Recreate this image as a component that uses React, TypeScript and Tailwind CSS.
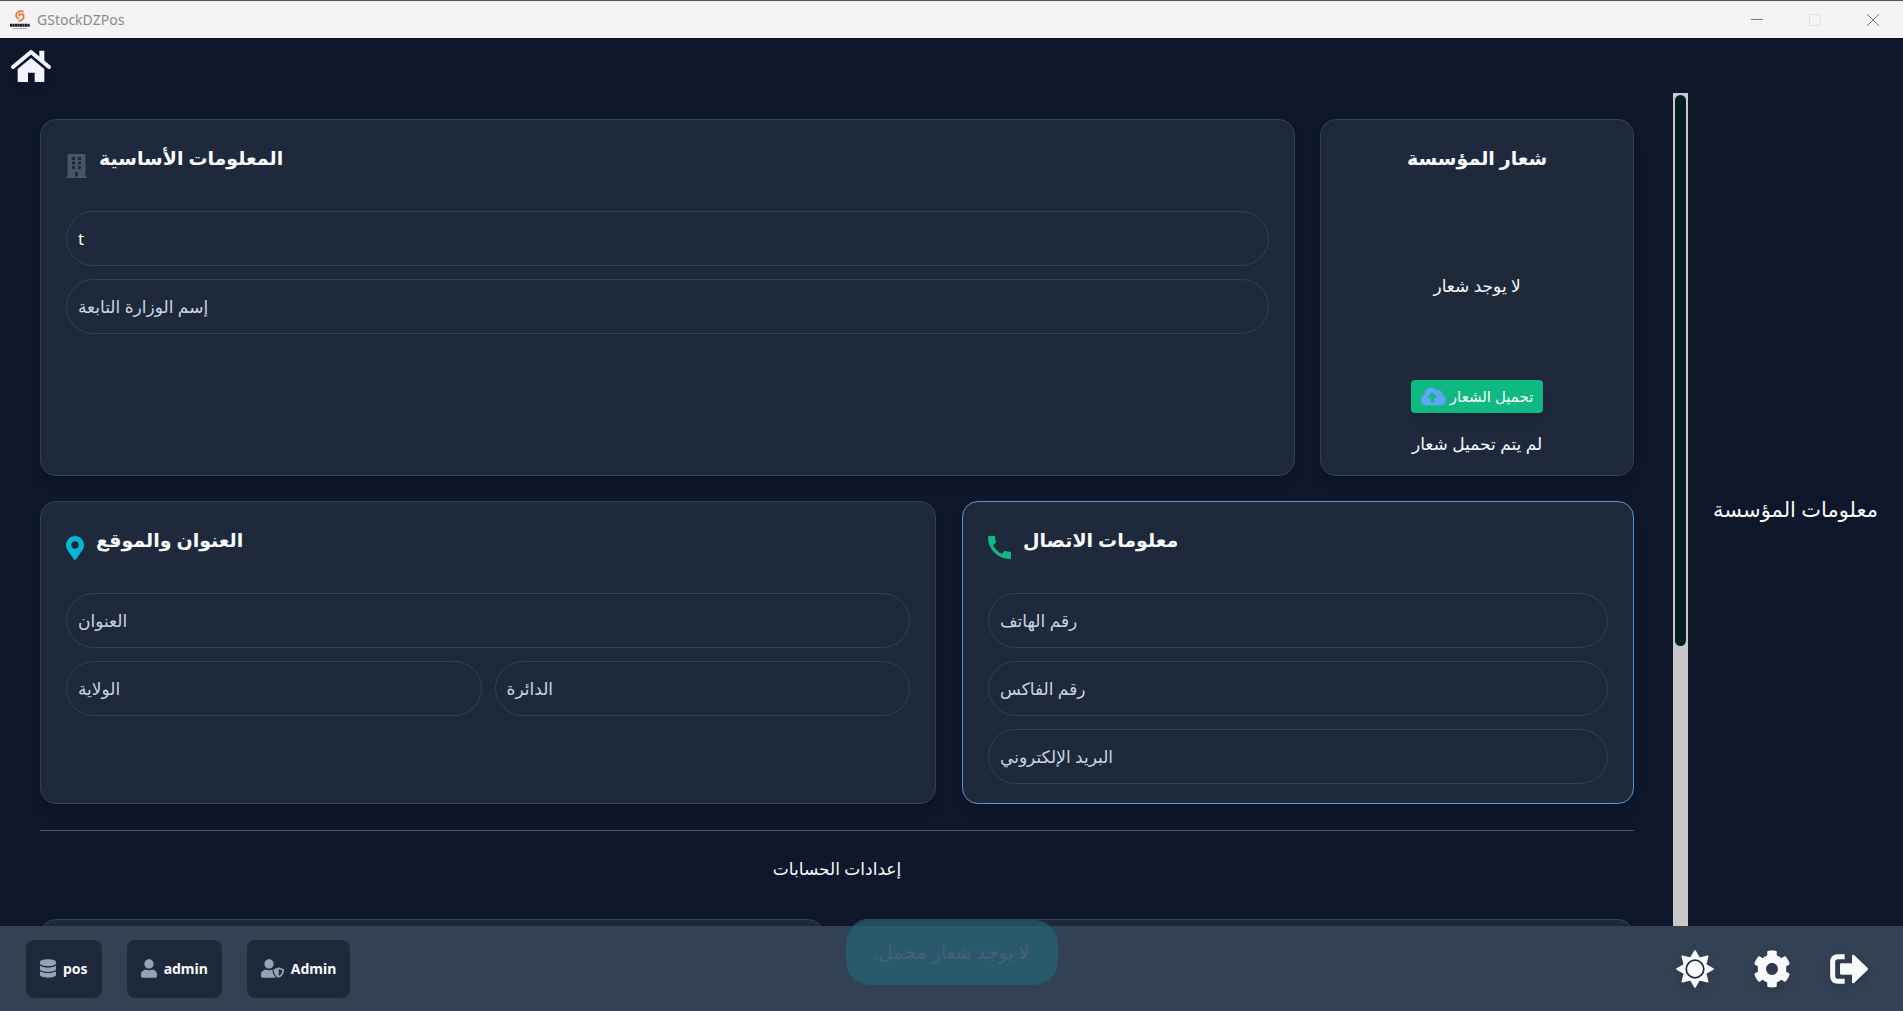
import type { ReactNode } from "react";
import {
  FaBuilding,
  FaCloudUploadAlt,
  FaCog,
  FaDatabase,
  FaMapMarkerAlt,
  FaUser,
  FaUserShield,
} from "react-icons/fa";

const cardBase = "rounded-2xl border bg-[#1e293b] px-[25px] shadow-lg";

function Card({
  title,
  icon,
  active = false,
  children,
}: {
  title: string;
  icon: ReactNode;
  active?: boolean;
  children: ReactNode;
}) {
  return (
    <section
      className={`${cardBase} pt-6 pb-[19px] ${active ? "border-[#5b94dc]" : "border-[#334155]"}`}
    >
      <header className="flex h-[67px] items-start gap-3">
        <span className="mt-[10px] flex">{icon}</span>
        <h2 dir="rtl" className="text-[19px] leading-7 font-bold text-slate-50">
          {title}
        </h2>
      </header>
      {children}
    </section>
  );
}

function Field({ label, value }: { label: string; value?: string }) {
  return (
    <input
      type="text"
      aria-label={label}
      placeholder={label}
      defaultValue={value}
      className="h-[55px] w-full min-w-0 rounded-full border border-[#334155] bg-transparent px-[11px] text-left text-[17px] text-slate-50 outline-none placeholder:text-slate-300"
    />
  );
}

function AppLogo() {
  return (
    <svg viewBox="0 0 20 20" className="size-5" aria-hidden="true">
      <path
        d="M13.6 1.4H9L6.2 3.8v3l2.4 2M9.2 6.4V4.4h4.4v4L11 10.6H8.4"
        fill="none"
        stroke="#e2763a"
        strokeWidth="1.6"
        strokeLinejoin="round"
      />
      <path d="M0 15.3h20" stroke="#1c1c1c" strokeWidth="3" strokeDasharray="2.2 0.3" />
      <path d="M2.5 18.6h15" stroke="#9a9a9a" strokeWidth="0.8" />
    </svg>
  );
}

function HomeIcon() {
  return (
    <svg viewBox="0 0 120 96" className="h-8 w-10" aria-hidden="true">
      <path
        d="M20 94V57L60 24l40 33v37q0 2-2 2H71V68H51v28H22q-2 0-2-2z"
        fill="currentColor"
      />
      <path d="M85 2h15v34L85 24z" fill="currentColor" />
      <path
        d="M6 51 60 6l54 45"
        fill="none"
        stroke="currentColor"
        strokeWidth="12"
        strokeLinecap="round"
        strokeLinejoin="round"
      />
    </svg>
  );
}

function PhoneIcon() {
  return (
    <svg viewBox="3 3 18 18" className="size-[23px] text-[#10b981]" aria-hidden="true">
      <path
        fill="currentColor"
        d="M20.01 15.38c-1.23 0-2.42-.2-3.53-.56a.98.98 0 0 0-1.01.24l-1.57 1.97c-2.83-1.35-5.48-3.9-6.89-6.83l1.95-1.66c.27-.28.35-.67.24-1.02-.37-1.11-.56-2.3-.56-3.53 0-.54-.45-.99-.99-.99H4.19C3.65 3 3 3.24 3 3.99 3 13.28 10.73 21 20.01 21c.71 0 .99-.63.99-1.18v-3.45c0-.54-.45-.99-.99-.99z"
      />
    </svg>
  );
}

function SunIcon() {
  return (
    <svg viewBox="-19 -19 38 38" className="size-[38px]" aria-hidden="true">
      <path
        fill="currentColor"
        stroke="currentColor"
        strokeWidth="1.6"
        strokeLinejoin="round"
        d="M0-18 4.4-10.6 12.7-12.7 10.6-4.4 18 0 10.6 4.4 12.7 12.7 4.4 10.6 0 18-4.4 10.6-12.7 12.7-10.6 4.4-18 0-10.6-4.4-12.7-12.7-4.4-10.6z"
      />
      <circle r="8.8" fill="currentColor" stroke="#1e2b3c" strokeWidth="1.7" />
    </svg>
  );
}

function ExitIcon() {
  return (
    <svg viewBox="0 0 114 90" className="h-[30px] w-[38px]" aria-hidden="true">
      <path
        d="M44 8H24Q8 8 8 24v42q0 16 16 16h20"
        fill="none"
        stroke="currentColor"
        strokeWidth="15"
      />
      <path
        d="M34 28h32V6q0-6 6-3l40 38q4 4 0 8L72 87q-6 3-6-3V62H34q-4 0-4-4V32q0-4 4-4z"
        fill="currentColor"
      />
    </svg>
  );
}

function TitleBar() {
  return (
    <div className="flex h-[38px] shrink-0 items-center border-t border-[#555053] bg-[#f3f3f3]">
      <div className="flex flex-1 items-center gap-[7px] pl-[10px]">
        <AppLogo />
        <span className="text-sm text-[#8a8a8a]">GStockDZPos</span>
      </div>
      <div className="flex items-center gap-[46px] pr-6 text-[#7c7c7c]">
        <button type="button" aria-label="Minimize" className="flex">
          <svg viewBox="0 0 12 12" className="size-3">
            <path d="M0 5.5h12" stroke="currentColor" />
          </svg>
        </button>
        <button type="button" aria-label="Maximize" disabled className="flex text-[#e0e0e0]">
          <svg viewBox="0 0 12 12" className="size-3">
            <path d="M.5.5h11v11H.5z" fill="none" stroke="currentColor" />
          </svg>
        </button>
        <button type="button" aria-label="Close" className="flex">
          <svg viewBox="0 0 12 12" className="size-3">
            <path d="M0 0l12 12M12 0L0 12" stroke="currentColor" />
          </svg>
        </button>
      </div>
    </div>
  );
}

function Badge({ icon, label }: { icon: ReactNode; label: string }) {
  return (
    <div className="flex h-[58px] items-center gap-[7px] rounded-lg bg-[#1e293b] px-[14px] text-sm font-bold text-slate-50">
      <span className="text-[19px] text-[#94a3b8]">{icon}</span>
      {label}
    </div>
  );
}

export default function App() {
  return (
    <div className="flex h-screen flex-col overflow-hidden bg-[#0f172a] font-['Noto_Sans','DejaVu_Sans',sans-serif] text-slate-50">
      <TitleBar />

      <nav className="h-[55px] shrink-0 pt-3 pl-[11px]">
        <button type="button" aria-label="الرئيسية" className="flex text-[#f1f5ff] drop-shadow-lg">
          <HomeIcon />
        </button>
      </nav>

      <div className="flex min-h-0 flex-1">
        <main className="min-w-0 flex-1 overflow-hidden pt-[26px] pr-[39px] pl-10">
          <div className="grid grid-cols-[4fr_1fr] gap-[25px]">
            <Card
              title="المعلومات الأساسية"
              icon={<FaBuilding className="h-6 w-[21px] text-[#475569]" />}
            >
              <div className="flex flex-col gap-[13px]">
                <Field label="إسم المؤسسة" value="t" />
                <Field label="إسم الوزارة التابعة" />
              </div>
            </Card>

            <section
              className={`${cardBase} flex h-[357px] flex-col items-center border-[#334155] pt-6`}
            >
              <h2 dir="rtl" className="text-[19px] leading-7 font-bold">
                شعار المؤسسة
              </h2>
              <div
                dir="rtl"
                className="mt-9 flex h-[152px] w-60 items-center justify-center bg-[#1e293a] pt-1 text-[17px]"
              >
                لا يوجد شعار
              </div>
              <button
                type="button"
                className="mt-5 flex h-[33px] items-center gap-1 rounded bg-[#10b981] px-[10px] text-[15px] whitespace-nowrap shadow-lg"
              >
                <FaCloudUploadAlt className="size-[25px] text-[#60a5fa]" />
                <span dir="rtl">تحميل الشعار</span>
              </button>
              <p dir="rtl" className="mt-[18px] text-[17px] whitespace-nowrap">
                لم يتم تحميل شعار
              </p>
            </section>
          </div>

          <div className="mt-[25px] grid grid-cols-[4fr_3fr] gap-[26px]">
            <Card
              title="العنوان والموقع"
              icon={<FaMapMarkerAlt className="h-6 w-[18px] text-[#06b6d4]" />}
            >
              <div className="grid grid-cols-2 gap-[13px]">
                <div className="col-span-2">
                  <Field label="العنوان" />
                </div>
                <Field label="الولاية" />
                <Field label="الدائرة" />
              </div>
            </Card>
            <Card active title="معلومات الاتصال" icon={<PhoneIcon />}>
              <div className="flex flex-col gap-[13px]">
                <Field label="رقم الهاتف" />
                <Field label="رقم الفاكس" />
                <Field label="البريد الإلكتروني" />
              </div>
            </Card>
          </div>

          <hr className="mt-[26px] border-[#475569]" />
          <h2 dir="rtl" className="mt-[26px] text-center text-[17px] leading-6 font-medium">
            إعدادات الحسابات
          </h2>
          <div className="mt-[38px] grid grid-cols-2 gap-[26px]">
            <section className={`${cardBase} h-40 border-[#334155]`} />
            <section className={`${cardBase} h-40 border-[#334155]`} />
          </div>
        </main>

        <div className="w-[15px] shrink-0 bg-[#c8c8c8] px-[2px] pt-[2px]" aria-hidden="true">
          <div className="h-[66.3%] rounded-full bg-[#001e26]" />
        </div>

        <aside className="flex w-[215px] shrink-0 items-center justify-center">
          <h1 dir="rtl" className="text-[21px] whitespace-nowrap">
            معلومات المؤسسة
          </h1>
        </aside>
      </div>

      <footer className="relative flex h-[85px] shrink-0 items-center justify-between bg-[#334155] pr-[35px] pl-[26px]">
        <div className="flex gap-[25px]">
          <Badge icon={<FaDatabase className="w-4" />} label="pos" />
          <Badge icon={<FaUser className="w-4" />} label="admin" />
          <Badge icon={<FaUserShield className="w-[23px]" />} label="Admin" />
        </div>
        <div className="flex items-center gap-[39px] text-slate-50">
          <button type="button" aria-label="المظهر" className="drop-shadow-lg">
            <SunIcon />
          </button>
          <button type="button" aria-label="الإعدادات" className="drop-shadow-lg">
            <FaCog className="size-[38px]" />
          </button>
          <button type="button" aria-label="خروج" className="drop-shadow-lg">
            <ExitIcon />
          </button>
        </div>
        <div
          role="status"
          dir="rtl"
          className="absolute -top-[6px] left-1/2 flex h-[65px] w-[212px] -translate-x-1/2 items-center justify-center rounded-3xl bg-[#1f7384]/50 text-[19px] text-[#475f78]"
        >
          لا يوجد شعار محمل.
        </div>
      </footer>
    </div>
  );
}
